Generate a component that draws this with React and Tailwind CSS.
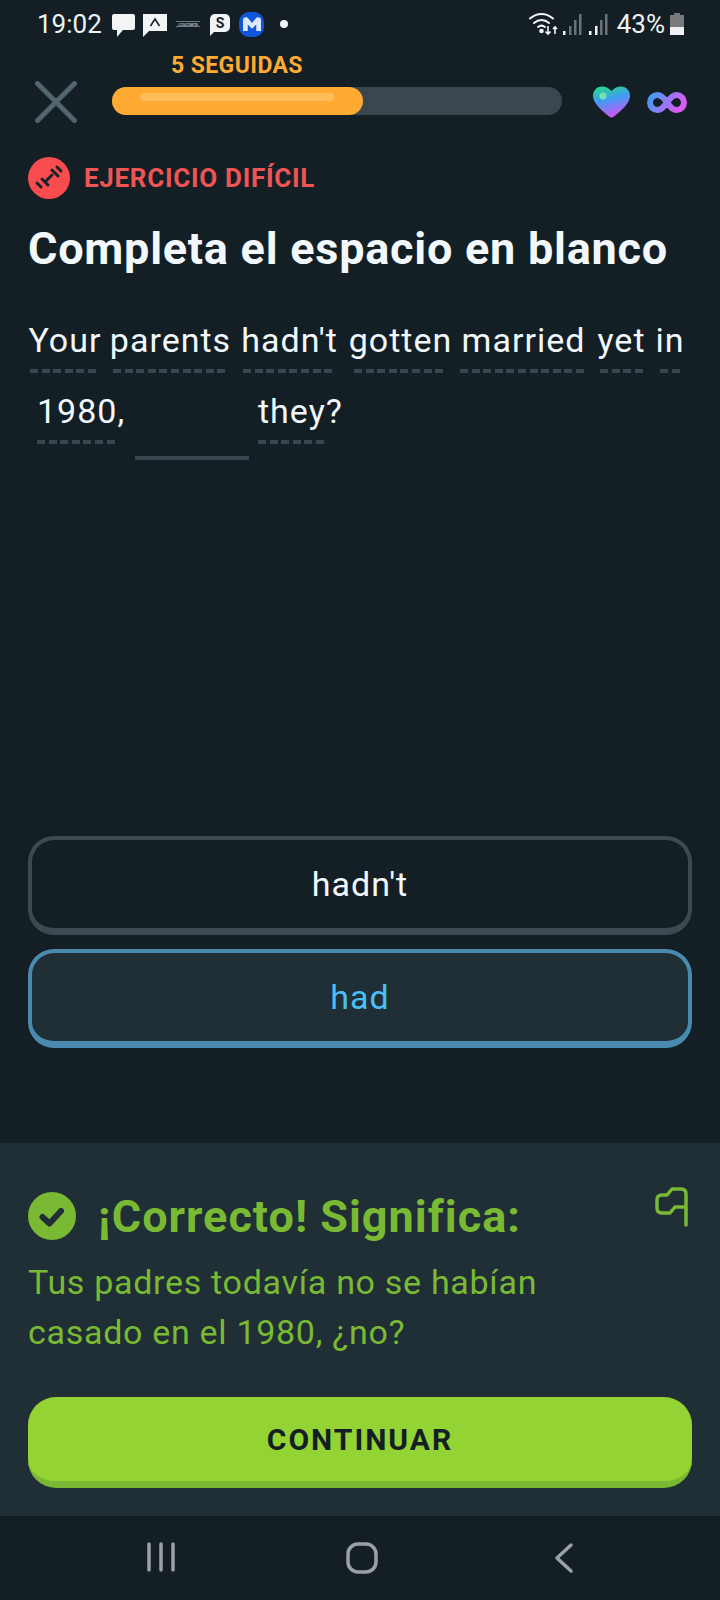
import React from "react";

const dashes =
  "h-1 bg-[repeating-linear-gradient(90deg,#37464f_0,#37464f_8px,transparent_8px,transparent_11.6px)]";

const StatusBar = () => (
  <div className="flex h-12 items-center pl-[37px] pr-9 font-['Roboto',sans-serif] text-[#eef2f4]">
    <span className="w-[75px] text-[26px] leading-none">19:02</span>
    <svg width="23" height="24" viewBox="0 0 23 24" className="mt-[3px]">
      <path d="M2 0h19a2 2 0 0 1 2 2v12a2 2 0 0 1-2 2H11l-6 7v-7H2a2 2 0 0 1-2-2V2a2 2 0 0 1 2-2z" fill="#f2f4f5" />
    </svg>
    <svg width="24" height="24" viewBox="0 0 24 24" className="ml-2 mt-[3px]">
      <path d="M0 0h24v17H6l-6 6z" fill="#f2f4f5" />
      <path d="M7.500 12l4.500-7 4.500 7" fill="none" stroke="#18232a" strokeWidth="1.600" />
    </svg>
    <span className="ml-[9px] w-[24px] border-y border-[#6f7a80] text-center text-[5px] leading-[4px] text-[#c9cfd2]">coursera</span>
    <div className="relative ml-[10px] -mt-[2px] flex h-[18px] w-[20px] items-center justify-center rounded-[5px] rounded-bl-none bg-[#f2f4f5] text-[14px] font-bold leading-none text-[#18232a]">
      S
      <div className="absolute -bottom-[4px] left-0 h-1 w-1 bg-[#f2f4f5] [clip-path:polygon(0_0,100%_0,0_100%)]" />
    </div>
    <div className="ml-[9px] flex h-[25px] w-[25px] items-center justify-center rounded-[10px] bg-[#0f56d9]">
      <svg width="18" height="14" viewBox="0 0 17 13">
        <path d="M0 2.500C0 0 3.500-.8 5 1.200L8.500 5.500 12 1.200C13.500-.8 17 0 17 2.500V13h-4.500V7L8.500 11 4.500 7v6H0z" fill="#dbe8ff" />
      </svg>
    </div>
    <div className="ml-[16px] h-2 w-2 rounded-full bg-[#f2f4f5]" />
    <div className="ml-auto flex items-center">
      <svg width="30" height="24" viewBox="0 0 30 24" fill="none" stroke="#f2f4f5" strokeWidth="2" strokeLinecap="round">
        <path d="M1 6.500C8 .5 17 .5 24 6.500" />
        <path d="M5 11c4.500-4 10.500-4 15 0" />
        <path d="M9 15c2.500-2 4.500-2 7 0" />
        <circle cx="12.500" cy="19" r="1.300" fill="#f2f4f5" />
        <path d="M19 14v8M16.500 19.500l2.500 2.500 2.500-2.500M26 22v-7M24 17l2-2 2 2" strokeWidth="1.600" strokeLinecap="butt" />
      </svg>
      <svg width="20" height="22" viewBox="0 0 20 22" className="ml-[3px]">
        <rect x="1" y="18" width="2.500" height="4" fill="#f2f4f5" />
        <rect x="7" y="13" width="2.500" height="9" fill="#6a7378" />
        <rect x="12" y="7" width="2.500" height="15" fill="#6a7378" />
        <rect x="17" y="1" width="2.500" height="21" fill="#6a7378" />
      </svg>
      <svg width="20" height="22" viewBox="0 0 20 22" className="ml-[6px]">
        <rect x="1" y="18" width="2.500" height="4" fill="#f2f4f5" />
        <rect x="7" y="13" width="2.500" height="9" fill="#f2f4f5" />
        <rect x="12" y="7" width="2.500" height="15" fill="#6a7378" />
        <rect x="17" y="1" width="2.500" height="21" fill="#6a7378" />
      </svg>
      <span className="ml-[9px] text-[26px] leading-none">43%</span>
      <svg width="14" height="22" viewBox="0 0 14 22" className="ml-[5px]">
        <path d="M4 0h6v2h4v20H0V2h4z" fill="#77797a" />
        <rect y="14" width="14" height="8" fill="#eef2f4" />
      </svg>
    </div>
  </div>
);

const Header = () => (
  <div>
    <div className="h-[26px] pl-[171px] pt-px font-['Roboto',sans-serif] text-[23px] font-bold leading-[26px] tracking-[0.4px] text-[#ffab33]">
      5 SEGUIDAS
    </div>
    <div className="flex h-12 items-center pl-[35px]">
      <svg width="42" height="42" viewBox="0 0 42 42" stroke="#52656d" strokeWidth="5" strokeLinecap="round">
        <path d="M2.500 2.500l37 37M39.500 2.500l-37 37" />
      </svg>
      <div className="-mt-[2px] ml-[35px] h-7 w-[450px] rounded-full bg-[#3a474f]">
        <div className="relative h-7 w-[251px] rounded-full bg-[#ffab33]">
          <div className="absolute left-7 top-[6px] h-2 w-[194px] rounded-full bg-[#ffbd5c]" />
        </div>
      </div>
      <svg width="37" height="32" viewBox="0 0 37 32" className="ml-[31px]">
        <defs>
          <linearGradient id="heart" x1="0" y1="0" x2="0.300" y2="1">
            <stop offset="0" stopColor="#22e27a" />
            <stop offset="0.500" stopColor="#3f9bf2" />
            <stop offset="1" stopColor="#c45cf5" />
          </linearGradient>
        </defs>
        <path d="M18.500 5C15 1 11 0 8 .5 3 1.200 0 5 0 10c0 7 8 14 16 20.500 1.500 1.300 3.500 1.300 5 0C29 24 37 17 37 10c0-5-3-8.800-8-9.500C26 0 22 1 18.500 5z" fill="url(#heart)" />
        <circle cx="10" cy="10" r="3.500" fill="#72e0b4" />
      </svg>
      <svg width="40" height="21" viewBox="0 0 40 21" fill="none" className="ml-[17px]">
        <defs>
          <linearGradient id="inf" x1="0" y1="0" x2="1" y2="0.300">
            <stop offset="0" stopColor="#3d9df5" />
            <stop offset="1" stopColor="#d95cf2" />
          </linearGradient>
        </defs>
        <path d="M20 10.500C17 6 14 3 10.500 3a7.500 7.500 0 0 0 0 15c3.500 0 6.500-3 9.500-7.500s6-7.500 9.500-7.500a7.500 7.500 0 0 1 0 15c-3.500 0-6.500-3-9.500-7.500z" stroke="url(#inf)" strokeWidth="6" />
      </svg>
    </div>
  </div>
);

// text is centred over its dotted line and may run past it
const Word = ({ children, className, center = true }) => (
  <div className={className}>
    <div className={`flex h-[51px] whitespace-nowrap leading-[44px] ${center ? "justify-center" : ""}`}>{children}</div>
    <div className={dashes} />
  </div>
);

export default function App() {
  return (
    <div className="flex h-[1600px] w-[720px] flex-col bg-[#141f25] font-['Roboto',sans-serif]">
      <StatusBar />
      <div className="h-[4px]" />
      <Header />

      <div className="flex min-h-0 flex-1 flex-col px-7">
        <div className="mt-[31px] flex h-[42px] items-center">
          <svg width="42" height="42" viewBox="0 0 42 42">
            <circle cx="21" cy="21" r="21" fill="#f94c4f" />
            <g stroke="#1a2329" strokeLinecap="round" fill="none" strokeWidth="3">
              <path d="M18.500 23.500L24 18" />
              <path d="M14 22l6 6M24 13l6 6M9 26l4 4M29 10l4 4" />
            </g>
          </svg>
          <span className="ml-[14px] text-[26px] font-bold tracking-[0.7px] text-[#ee5555]">EJERCICIO DIFÍCIL</span>
        </div>
        <h1 className="mt-5 h-[60px] whitespace-nowrap text-[45px] font-bold leading-[60px] tracking-[0.75px] text-[#f1f7fb]">
          Completa el espacio en blanco
        </h1>

        <div className="mt-[39px] text-[34px] tracking-[1px] text-[#f1f7fb]">
          <div className="flex">
            <Word className="ml-[2px] w-[70px]">Your</Word>
            <Word className="ml-[13px] w-[115px]">parents</Word>
            <Word className="ml-[15px] w-[93px]">hadn't</Word>
            <Word className="ml-[18px] w-[93px]">gotten</Word>
            <Word className="ml-[13px] w-[127px]">married</Word>
            <Word className="ml-[13px] w-[43px]">yet</Word>
            <Word className="ml-[17px] w-[20px]">in</Word>
          </div>
          <div className="mt-4 flex items-start">
            <Word className="ml-[9px] w-[80px]" center={false}>1980,</Word>
            <div className="ml-[18px] mt-[67px] h-1 w-[114px] bg-[#37464f]" />
            <Word className="ml-[9px] w-[68px]" center={false}>they?</Word>
          </div>
        </div>

        <div className="mb-[95px] mt-auto flex flex-col gap-[14px] text-[34px] tracking-[1px]">
          <div className="flex h-[99px] items-center justify-center rounded-[26px] border-4 border-b-[7px] border-[#3d4a52] text-[#f1f7fb]">
            hadn't
          </div>
          <div className="flex h-[99px] items-center justify-center rounded-[26px] border-4 border-b-[7px] border-[#4a8aae] bg-[#202f36] text-[#49c0f8]">
            had
          </div>
        </div>
      </div>

      <div className="h-[373px] bg-[#202f36] px-7 pt-[49px]">
        <div className="flex h-12 items-center">
          <svg width="48" height="48" viewBox="0 0 48 48" fill="none">
            <circle cx="24" cy="24" r="24" fill="#79b933" />
            <path d="M14.500 25l7 6.500L33 19" stroke="#202f36" strokeWidth="6" strokeLinecap="round" strokeLinejoin="round" />
          </svg>
          <span className="ml-[22px] text-[45px] font-bold leading-none tracking-[1px] text-[#79b933]">¡Correcto! Significa:</span>
          <svg width="34" height="41" viewBox="0 0 34 41" fill="none" className="-mt-[19px] ml-auto mr-[3px]">
            <path
              d="M31 39V8q0-5-5-5H17l-5 6H7q-5 0-5 5V22q0 5 5 5H15l5-6H31"
              stroke="#79b933"
              strokeWidth="3.500"
              strokeLinecap="round"
              strokeLinejoin="round"
            />
          </svg>
        </div>
        <p className="mt-[17px] w-[580px] text-[34px] leading-[50px] tracking-[0.7px] text-[#79b933]">
          Tus padres todavía no se habían casado en el 1980, ¿no?
        </p>
        <button className="mt-10 flex h-[91px] w-full items-center justify-center rounded-[28px] border-b-[7px] border-[#79b933] bg-[#93d333] text-[30px] font-bold tracking-[2px] text-[#131f24]">
          CONTINUAR
        </button>
      </div>

      <div className="flex h-[84px] items-start justify-between pl-[147px] pr-[146px] pt-[26px]">
        <svg width="28" height="30" viewBox="0 0 28 30" stroke="#9aa2a6" strokeWidth="3.500" strokeLinecap="round">
          <path d="M2 2v26M14 2v26M26 2v26" />
        </svg>
        <svg width="32" height="32" viewBox="0 0 32 32" fill="none" stroke="#9aa2a6" strokeWidth="3.500" className="mr-[5px]">
          <rect x="2" y="2" width="28" height="28" rx="10" />
        </svg>
        <svg width="20" height="32" viewBox="0 0 20 32" fill="none" stroke="#9aa2a6" strokeWidth="3.500" strokeLinecap="round" strokeLinejoin="round">
          <path d="M17 3L3 16l14 13" />
        </svg>
      </div>
    </div>
  );
}
